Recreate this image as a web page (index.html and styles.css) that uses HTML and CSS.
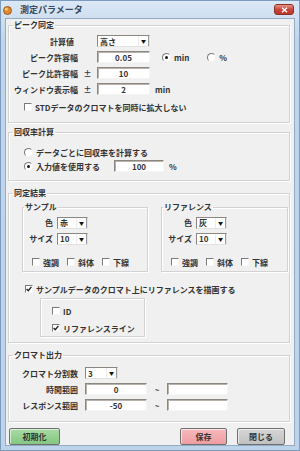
FILE: index.html
```html
<!DOCTYPE html>
<html lang="ja">
<head>
  <meta charset="UTF-8">
  <meta name="viewport" content="width=device-width, initial-scale=1.0">
  <title>測定パラメータ</title>
  <link rel="stylesheet" href="styles.css">
</head>
<body>

<div class="window">
  <div class="titlebar">
    <svg class="app-icon" width="9" height="9" viewBox="0 0 9 9">
      <circle cx="4.5" cy="4.5" r="4" fill="#e08a2c" stroke="#8a4a12" stroke-width="0.8"/>
      <circle cx="3.3" cy="3.2" r="1.4" fill="#f7d08a"/>
    </svg>
    <span class="title">測定パラメータ</span>
    <span class="close-btn">
      <svg width="7" height="6" viewBox="0 0 7 6"><path d="M1 0.8 L6 5.2 M6 0.8 L1 5.2" stroke="#fff" stroke-width="1.4"/></svg>
    </span>
  </div>

  <div class="client">

    <!-- ピーク同定 -->
    <fieldset class="group g-peak">
      <legend>ピーク同定</legend>
      <div class="row">
        <span class="lbl lbl-calc">計算値</span><span class="pm"></span>
        <div class="select w-peak"><span class="val">高さ</span><span class="arrow">▼</span></div>
      </div>
      <div class="row">
        <span class="lbl">ピーク許容幅</span><span class="pm"></span>
        <input class="box w-peak" value="0.05">
        <span class="radio on first-radio"><i></i></span><span>min</span>
        <span class="radio second-radio"><i></i></span><span>%</span>
      </div>
      <div class="row">
        <span class="lbl">ピーク比許容幅</span><span class="pm">±</span>
        <input class="box w-peak" value="10">
      </div>
      <div class="row">
        <span class="lbl">ウィンドウ表示幅</span><span class="pm">±</span>
        <input class="box w-peak" value="2">
        <span class="unit">min</span>
      </div>
      <div class="row row-std">
        <span class="chk"></span><span>STDデータのクロマトを同時に拡大しない</span>
      </div>
    </fieldset>

    <!-- 回収率計算 -->
    <fieldset class="group g-recovery">
      <legend>回収率計算</legend>
      <div class="row row-s">
        <span class="radio"><i></i></span><span>データごとに回収率を計算する</span>
      </div>
      <div class="row row-s">
        <span class="radio on"><i></i></span><span class="opt-text">入力値を使用する</span>
        <input class="box w-rate" value="100">
        <span class="unit">%</span>
      </div>
    </fieldset>

    <!-- 同定結果 -->
    <fieldset class="group g-result">
      <legend>同定結果</legend>
      <div class="subs">
        <fieldset class="sub sub-sample">
          <legend>サンプル</legend>
          <div class="row row-m">
            <span class="lbl-s">色</span>
            <div class="select w-sub"><span class="val">赤</span><span class="arrow">▼</span></div>
          </div>
          <div class="row row-m second">
            <span class="lbl-s">サイズ</span>
            <div class="select w-sub"><span class="val">10</span><span class="arrow">▼</span></div>
          </div>
          <div class="row row-s styles">
            <span class="chk"></span><span class="st">強調</span>
            <span class="chk"></span><span class="st">斜体</span>
            <span class="chk"></span><span class="st">下線</span>
          </div>
        </fieldset>
        <fieldset class="sub sub-ref">
          <legend>リファレンス</legend>
          <div class="row row-m">
            <span class="lbl-s">色</span>
            <div class="select w-sub"><span class="val">灰</span><span class="arrow">▼</span></div>
          </div>
          <div class="row row-m second">
            <span class="lbl-s">サイズ</span>
            <div class="select w-sub"><span class="val">10</span><span class="arrow">▼</span></div>
          </div>
          <div class="row row-s styles">
            <span class="chk"></span><span class="st">強調</span>
            <span class="chk"></span><span class="st">斜体</span>
            <span class="chk"></span><span class="st">下線</span>
          </div>
        </fieldset>
      </div>

      <div class="row row-s row-draw">
        <span class="chk on"><svg width="6" height="6" viewBox="0 0 6 6"><path d="M0.6 3 L2.3 4.8 L5.4 0.9" fill="none" stroke="#222" stroke-width="1.4"/></svg></span>
        <span>サンプルデータのクロマト上にリファレンスを描画する</span>
      </div>
      <div class="inner-box">
        <div class="row row-s">
          <span class="chk"></span><span>ID</span>
        </div>
        <div class="row row-s second-line">
          <span class="chk on"><svg width="6" height="6" viewBox="0 0 6 6"><path d="M0.6 3 L2.3 4.8 L5.4 0.9" fill="none" stroke="#222" stroke-width="1.4"/></svg></span>
          <span>リファレンスライン</span>
        </div>
      </div>
    </fieldset>

    <!-- クロマト出力 -->
    <fieldset class="group g-chroma">
      <legend>クロマト出力</legend>
      <div class="row row-s">
        <span class="lbl">クロマト分割数</span>
        <div class="select w-div"><span class="val">3</span><span class="arrow">▼</span></div>
      </div>
      <div class="row row-s next">
        <span class="lbl">時間範囲</span>
        <input class="box w-range" value="0">
        <span class="tilde">~</span>
        <input class="box w-range2" value="">
      </div>
      <div class="row row-s next">
        <span class="lbl">レスポンス範囲</span>
        <input class="box w-range" value="-50">
        <span class="tilde">~</span>
        <input class="box w-range2" value="">
      </div>
    </fieldset>

    <div class="buttons">
      <button class="btn btn-init">初期化</button>
      <span class="spacer"></span>
      <button class="btn btn-save">保存</button>
      <button class="btn btn-close">閉じる</button>
    </div>

  </div>
</div>

</body>
</html>
```

FILE: styles.css
```css
body {
  margin: 0;
  font-family: "Noto Sans CJK JP", "Noto Sans", sans-serif;
  font-size: 8px;
  font-weight: bold;
  line-height: 11px;
  color: #333333;
  background: #ffffff;
}

.window {
  width: 300px;
  height: 451px;
  box-sizing: border-box;
  border: 1px solid #7d9cbd;
  background: linear-gradient(#dbe8f5, #bfd5ec 40px, #bcd3ea);
  display: flex;
  flex-direction: column;
}

/* title bar */
.titlebar {
  height: 17px;
  display: flex;
  align-items: center;
  padding: 0 5px 0 2px;
}

.app-icon {
  margin-top: 1px;
}

.title {
  margin-left: 8px;
  font-size: 9px;
  color: #3a4a5e;
}

.close-btn {
  margin-left: auto;
  align-self: flex-start;
  margin-top: 3px;
  width: 20px;
  height: 11px;
  box-sizing: border-box;
  border: 1px solid #8c2f22;
  border-radius: 3px;
  background: linear-gradient(#e9958a, #c8473a 50%, #b9362a);
  display: flex;
  align-items: center;
  justify-content: center;
}

/* client area */
.client {
  flex: 1;
  margin: 0 4px 4px;
  border: 1px solid #93abc4;
  background: #f0f0f0;
  padding: 1px 4px 0 2px;
}

/* group boxes */
fieldset {
  margin: 0;
  padding: 0;
  min-width: 0;
  border: 1px solid #d2d2d2;
  box-shadow: inset 1px 1px 0 #ffffff, 1px 1px 0 #ffffff;
}

legend {
  margin-left: 4px;
  padding: 0 1px;
  line-height: 10px;
}

.g-peak { padding: 3px 0 7px; }
.g-recovery { margin-top: 4px; padding: 8px 0 7px; }
.g-result { margin-top: 7px; padding: 4px 0 5px; }
.g-chroma { margin-top: 7px; padding: 6px 0 9px; }

.row {
  display: flex;
  align-items: center;
  height: 16px;
  white-space: nowrap;
}

.row-s { height: 14px; }
.row-m { height: 15px; }

.lbl {
  width: 69px;
  text-align: right;
}

.lbl-calc {
  padding-right: 4px;
  width: 65px;
}

.pm {
  width: 19px;
  text-align: center;
}

.unit {
  margin-left: 5px;
}

/* text boxes */
.box {
  box-sizing: border-box;
  height: 12px;
  padding: 0;
  margin: 0;
  border: 1px solid;
  border-color: #8b8680 #f4f4f4 #f4f4f4 #8b8680;
  box-shadow: inset 1px 1px 0 #b8b2aa;
  background: #ffffff;
  font-family: inherit;
  font-size: 8px;
  font-weight: bold;
  color: #333333;
  text-align: center;
  outline: none;
}

/* drop-downs */
.select {
  box-sizing: border-box;
  height: 12px;
  display: flex;
  align-items: center;
  border: 1px solid;
  border-color: #8b8680 #e2e2e2 #e2e2e2 #8b8680;
  background: #ffffff;
}

.select .val {
  flex: 1;
  padding-left: 2px;
}

.select .arrow {
  width: 9px;
  height: 100%;
  font-size: 5px;
  line-height: 10px;
  text-align: center;
  color: #111;
  border-left: 1px solid #ededed;
  border-right: 1px solid #9a9a9a;
}

.w-peak { width: 53px; }
.w-rate { width: 50px; }
.w-sub { width: 31px; }
.w-div { width: 33px; margin-left: 7px; }
.w-range { width: 62px; margin-left: 7px; }
.w-range2 { width: 61px; }

/* check boxes and radio buttons */
.chk {
  box-sizing: border-box;
  width: 8px;
  height: 8px;
  flex: none;
  margin-right: 3px;
  border: 1px solid;
  border-color: #7a7a7a #f7f7f7 #f7f7f7 #7a7a7a;
  background: #ffffff;
  display: inline-flex;
  align-items: center;
  justify-content: center;
}

.radio {
  box-sizing: border-box;
  width: 9px;
  height: 9px;
  flex: none;
  margin-right: 3px;
  border-radius: 50%;
  border: 1px solid;
  border-color: #7a7a7a #f4f4f4 #f4f4f4 #7a7a7a;
  background: #ffffff;
  display: inline-flex;
  align-items: center;
  justify-content: center;
}

.radio.on i {
  width: 3px;
  height: 3px;
  border-radius: 50%;
  background: #1a1a1a;
}

.first-radio { margin-left: 12px; }
.second-radio { margin-left: 18px; }

.row-std { margin-top: 2px; }
.row-std .chk { margin-left: 15px; }

.g-recovery .radio { margin-left: 15px; }
.opt-text { width: 78px; }

/* 同定結果 */
.subs {
  display: flex;
  gap: 13px;
  margin-left: 13px;
}

.sub {
  padding: 3px 0 2px;
}

.sub legend {
  margin-left: 1px;
}

.sub-sample { width: 124px; }
.sub-ref { width: 125px; }

.lbl-s {
  width: 30px;
  margin-right: 4px;
  text-align: right;
}

.row-m.second { margin-top: 1px; }

.styles { margin-top: 9px; }
.styles .chk:first-child { margin-left: 9px; }
.styles .st { width: 16px; margin-right: 8px; }

.row-draw { margin-top: 10px; }
.row-draw .chk { margin-left: 16px; }

.inner-box {
  margin: 2px 0 0 31px;
  width: 105px;
  box-sizing: border-box;
  padding: 5px 0 1px 11px;
  border: 1px solid #d2d2d2;
  box-shadow: inset 1px 1px 0 #ffffff, 1px 1px 0 #ffffff;
}

.second-line { margin-top: 3px; }

/* クロマト出力 */
.next { margin-top: 2px; }

.tilde {
  width: 20px;
  text-align: center;
}

/* buttons */
.buttons {
  display: flex;
  margin-top: 6px;
  height: 17px;
}

.spacer { flex: 1; }

.btn {
  box-sizing: border-box;
  height: 17px;
  padding: 0;
  border: 1px solid #6f6f6f;
  border-radius: 2px;
  box-shadow: inset 1px 1px 0 rgba(255, 255, 255, 0.6);
  font-family: inherit;
  font-size: 8px;
  font-weight: bold;
  color: #333333;
}

.btn-init {
  width: 51px;
  margin-left: 1px;
  background: linear-gradient(#a8dca5, #84c682);
}

.btn-save {
  width: 47px;
  background: linear-gradient(#f7b9bc, #ee9da2);
}

.btn-close {
  width: 48px;
  margin-left: 10px;
  margin-right: 5px;
  background: linear-gradient(#d6d6d6, #c0c0c0);
}
```
